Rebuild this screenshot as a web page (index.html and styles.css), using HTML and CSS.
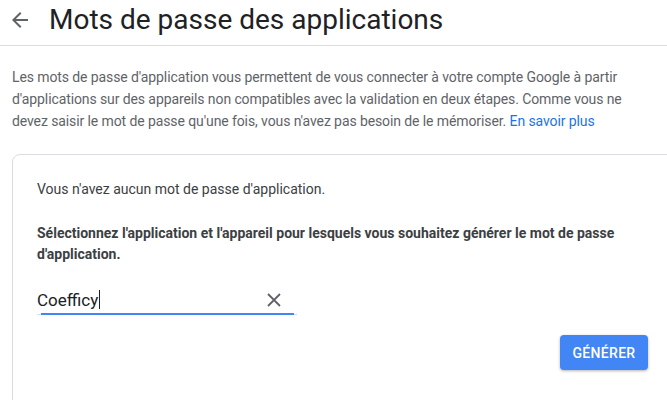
FILE: index.html
```html
<!DOCTYPE html>
<html lang="fr">
<head>
<meta charset="utf-8">
<title>Mots de passe des applications</title>
<link rel="stylesheet" href="styles.css">
</head>
<body>
<header class="topbar">
  <span class="back" aria-label="Retour">
    <svg width="24" height="24" viewBox="0 0 24 24"><path d="M20 11H7.83l5.59-5.59L12 4l-8 8 8 8 1.41-1.41L7.83 13H20v-2z" fill="#5f6368"/></svg>
  </span>
  <h1 class="title">Mots de passe des applications</h1>
</header>
<main class="content">
  <p class="intro">Les mots de passe d'application vous permettent de vous connecter à votre compte Google à partir d'applications sur des appareils non compatibles avec la validation en deux étapes. Comme vous ne devez saisir le mot de passe qu'une fois, vous n'avez pas besoin de le mémoriser. <a class="link" href="#">En savoir plus</a></p>
  <section class="card">
    <p class="empty">Vous n'avez aucun mot de passe d'application.</p>
    <p class="instr">Sélectionnez l'application et l'appareil pour lesquels vous souhaitez générer le mot de passe d'application.</p>
    <div class="field">
      <span class="value">Coefficy<span class="caret"></span></span>
      <span class="clear">
        <svg width="14" height="14" viewBox="0 0 14 14"><path d="M1 1L13 13M13 1L1 13" stroke="#5f6368" stroke-width="1.8" fill="none"/></svg>
      </span>
    </div>
    <div class="actions">
      <button class="btn">GÉNÉRER</button>
    </div>
  </section>
</main>
</body>
</html>
```
FILE: styles.css
```css
html, body {
  margin: 0;
  padding: 0;
  background: #fff;
  overflow: hidden;
}
body {
  width: 667px;
  height: 400px;
  font-family: Roboto, "Liberation Sans", Arial, sans-serif;
}
.topbar {
  height: 46px;
  box-sizing: border-box;
  border-bottom: 1px solid #dadce0;
  display: flex;
  align-items: center;
  padding-left: 8px;
}
.back {
  width: 24px;
  height: 24px;
  display: flex;
  margin-top: -6px;
}
.title {
  margin: -7px 0 0 17px;
  font-family: Roboto, "Liberation Sans", sans-serif;
  font-weight: 400;
  font-size: 28px;
  color: #202124;
}
.content {
  padding: 0 0 0 12px;
}
.intro {
  margin: 20px 0 0 0;
  width: 648px;
  font-size: 14px;
  line-height: 22px;
  color: #5f6368;
  letter-spacing: -0.1px;
}
.link {
  color: #1a73e8;
  text-decoration: none;
}
.card {
  margin-top: 22px;
  width: 680px;
  height: 260px;
  box-sizing: border-box;
  border: 1px solid #dadce0;
  border-radius: 8px;
  padding: 24px 0 0 24px;
  color: #3c4043;
}
.empty {
  margin: 0;
  font-size: 14px;
  line-height: 20px;
}
.instr {
  margin: 24px 0 0 0;
  width: 600px;
  font-size: 14px;
  line-height: 21px;
  font-weight: 700;
}
.field {
  position: relative;
  margin-top: 20px;
  width: 260px;
  height: 30px;
  display: flex;
  align-items: center;
  justify-content: space-between;
  border-bottom: 1px solid #dadce0;
  box-sizing: border-box;
}
.field::after {
  content: "";
  position: absolute;
  left: 4px;
  right: 3px;
  bottom: -1px;
  height: 2px;
  background: #4285f4;
}
.value {
  font-size: 17px;
  color: #202124;
  display: inline-flex;
  align-items: center;
}
.caret {
  display: inline-block;
  width: 1px;
  height: 19px;
  background: #202124;
  margin-left: 1px;
}
.clear {
  display: flex;
  margin-right: 16px;
}
.actions {
  width: 611px;
  display: flex;
  justify-content: flex-end;
  margin-top: 20px;
}
.btn {
  width: 88px;
  height: 35px;
  border: 0;
  border-radius: 4px;
  background: #4285f4;
  color: #fff;
  font-family: Roboto, "Liberation Sans", sans-serif;
  font-weight: 500;
  font-size: 14px;
  letter-spacing: 0.3px;
  box-shadow: 0 1px 3px rgba(0,0,0,0.3);
  padding: 0;
}
```
